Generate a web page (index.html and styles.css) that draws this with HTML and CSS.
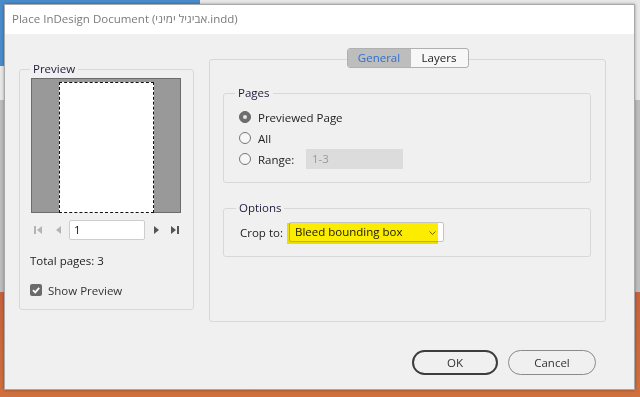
FILE: index.html
```html
<html>
<head>
  <meta charset="UTF-8">
  <title>Place InDesign Document</title>

  <link rel="stylesheet" href="styles.css">
</head>
<body>
  <div class="dialog">
    <div class="titlebar">Place InDesign Document (אביגיל ימיני.indd)</div>

    <div class="main">
      <fieldset class="group preview-group">
        <legend>Preview</legend>
        <div class="preview-box">
          <div class="preview-page"></div>
        </div>

        <div class="pager">
          <svg class="nav off" width="8" height="8" viewBox="0 0 8 8"><rect x="0" y="0" width="2" height="8"/><path d="M8 0 L3 4 L8 8 Z"/></svg>
          <svg class="nav off prev" width="5" height="8" viewBox="0 0 5 8"><path d="M5 0 L0 4 L5 8 Z"/></svg>
          <div class="page-input">1</div>
          <svg class="nav next" width="5" height="8" viewBox="0 0 5 8"><path d="M0 0 L5 4 L0 8 Z"/></svg>
          <svg class="nav last" width="8" height="8" viewBox="0 0 8 8"><path d="M0 0 L5 4 L0 8 Z"/><rect x="6" y="0" width="2" height="8"/></svg>
        </div>

        <div class="total">Total pages: 3</div>

        <div class="check-row">
          <svg width="12" height="12" viewBox="0 0 12 12"><rect x="0" y="0" width="12" height="12" rx="2" fill="#6b6b6b"/><path d="M3 6.2 L5.2 8.4 L9.2 3.8" stroke="#fff" stroke-width="1.8" fill="none"/></svg>
          <span>Show Preview</span>
        </div>
      </fieldset>

      <div class="panel">
        <div class="tabs">
          <div class="tab active">General</div>
          <div class="tab">Layers</div>
        </div>

        <fieldset class="group pages">
          <legend>Pages</legend>
          <div class="radio-row">
            <svg width="12" height="12" viewBox="0 0 12 12"><circle cx="6" cy="6" r="5.5" fill="#6e6e6e" stroke="#666"/><circle cx="6" cy="6" r="2" fill="#e6e6e6"/></svg>
            <span>Previewed Page</span>
          </div>
          <div class="radio-row">
            <svg width="12" height="12" viewBox="0 0 12 12"><circle cx="6" cy="6" r="5.5" fill="#f7f7f7" stroke="#777"/></svg>
            <span>All</span>
          </div>
          <div class="radio-row">
            <svg width="12" height="12" viewBox="0 0 12 12"><circle cx="6" cy="6" r="5.5" fill="#f7f7f7" stroke="#777"/></svg>
            <span class="range-label">Range:</span>
            <div class="range-input">1-3</div>
          </div>
        </fieldset>

        <fieldset class="group options">
          <legend>Options</legend>
          <div class="crop-row">
            <span class="crop-label">Crop to:</span>
            <div class="select">
              <span>Bleed bounding box</span>
              <svg class="chevron" width="7" height="4" viewBox="0 0 7 4"><path d="M0.5 0.5 L3.5 3.5 L6.5 0.5" stroke="#6a6a40" fill="none"/></svg>
              <div class="highlight"></div>
            </div>
          </div>
        </fieldset>
      </div>
    </div>

    <div class="footer">
      <div class="btn btn-ok">OK</div>
      <div class="btn">Cancel</div>
    </div>
  </div>
</body>
</html>
```

FILE: styles.css
```css
* {
  margin: 0;
  padding: 0;
  box-sizing: border-box;
}

body {
  width: 640px;
  height: 397px;
  padding: 4px 0 0 4px;
  overflow: hidden;
  font-family: "Open Sans", "DejaVu Sans", sans-serif;
  font-size: 11.5px;
  color: #222;
  background:
    linear-gradient(#4a8ccb, #4a8ccb) no-repeat 0 0 / 200px 66px,
    linear-gradient(to bottom, #e8e8e8 0, #e8e8e8 100px, #bdbdbd 100px, #bdbdbd 292px, #c8623c 292px, #d0703e 397px);
}

.dialog {
  width: 631px;
  height: 386px;
  background: #f0f0f0;
  border: 1px solid #a9a9a9;
  box-shadow: 0 0 3px rgba(0, 0, 0, 0.35);
  display: flex;
  flex-direction: column;
}

.titlebar {
  height: 29px;
  line-height: 28px;
  padding-left: 7px;
  background: #fff;
  color: #7a7a7a;
}

.main {
  display: flex;
  align-items: flex-start;
  gap: 15px;
  padding: 25px 0 0 14px;
}

.group {
  border: 1px solid #d8d8d8;
  border-radius: 3px;
}

.group legend {
  line-height: 16px;
  padding: 0 3px;
  color: #1c1c3a;
}

/* preview */

.preview-group {
  width: 175px;
  height: 249px;
  margin-top: 2px;
  padding: 1px 9px 0 9px;
}

.preview-group legend {
  margin-left: 1px;
}

.preview-box {
  width: 150px;
  height: 135px;
  margin-left: 2px;
  padding: 3px 0 0 27px;
  background: #999;
  border: 1px solid #6c6c6c;
}

.preview-page {
  width: 95px;
  height: 131px;
  background: #fff;
  border: 1px dashed #111;
}

.pager {
  display: flex;
  align-items: center;
  height: 20px;
  margin-top: 7px;
}

.nav {
  fill: #555;
}

.nav.off {
  fill: #b4b4b4;
  margin-left: 5px;
}

.nav.prev {
  margin-left: 14px;
}

.page-input {
  width: 76px;
  height: 20px;
  margin-left: 8px;
  padding-left: 4px;
  line-height: 18px;
  background: #fff;
  border: 1px solid #cdcdcd;
  border-radius: 2px;
  color: #111;
}

.nav.next {
  margin-left: 9px;
}

.nav.last {
  margin-left: 12px;
}

.total {
  line-height: 16px;
  margin-top: 13px;
  padding-left: 1px;
}

.check-row {
  display: flex;
  align-items: center;
  gap: 6px;
  height: 16px;
  margin-top: 13px;
  padding-left: 1px;
}

.check-row span {
  color: #333;
}

/* right panel */

.panel {
  position: relative;
  width: 397px;
  height: 263px;
  padding: 25px 14px 0 13px;
  border: 1px solid #d8d8d8;
  border-radius: 3px;
}

.tabs {
  position: absolute;
  top: -12px;
  left: 50%;
  transform: translateX(-50%);
  display: flex;
  height: 20px;
  border: 1px solid #b0b0b0;
  border-radius: 3px;
  overflow: hidden;
  background: #f7f7f7;
}

.tab {
  width: 57px;
  line-height: 18px;
  text-align: center;
  color: #222;
}

.tab.active {
  width: 63px;
  background: #bdbdbd;
  color: #2f6fd1;
}

.pages {
  height: 98px;
  padding: 6px 0 0 15px;
}

.pages legend,
.options legend {
  margin-left: -4px;
}

.radio-row {
  display: flex;
  align-items: center;
  gap: 7px;
  height: 20px;
  margin-bottom: 1px;
}

.range-label {
  width: 41px;
}

.range-input {
  width: 97px;
  height: 20px;
  line-height: 20px;
  padding-left: 6px;
  background: #dcdcdc;
  color: #999;
}

.options {
  height: 57px;
  margin-top: 17px;
  padding: 6px 0 0 16px;
}

.crop-row {
  display: flex;
  align-items: center;
  height: 20px;
}

.crop-label {
  width: 49px;
}

.select {
  position: relative;
  width: 155px;
  height: 20px;
  padding-left: 5px;
  line-height: 18px;
  background: #fff;
  border: 1px solid #c4c4c4;
  border-radius: 2px;
}

.chevron {
  position: absolute;
  right: 7px;
  top: 8px;
}

.highlight {
  position: absolute;
  left: -3px;
  top: 0;
  width: 151px;
  height: 21px;
  background: #fbec00;
  mix-blend-mode: multiply;
}

/* buttons */

.footer {
  display: flex;
  justify-content: flex-end;
  gap: 10px;
  margin-top: 28px;
  padding-right: 38px;
}

.btn {
  width: 88px;
  height: 25px;
  line-height: 23px;
  text-align: center;
  border: 1px solid #8a8a8a;
  border-radius: 13px;
  color: #333;
}

.btn-ok {
  width: 86px;
  line-height: 21px;
  border: 2px solid #3d3d3d;
}
```
